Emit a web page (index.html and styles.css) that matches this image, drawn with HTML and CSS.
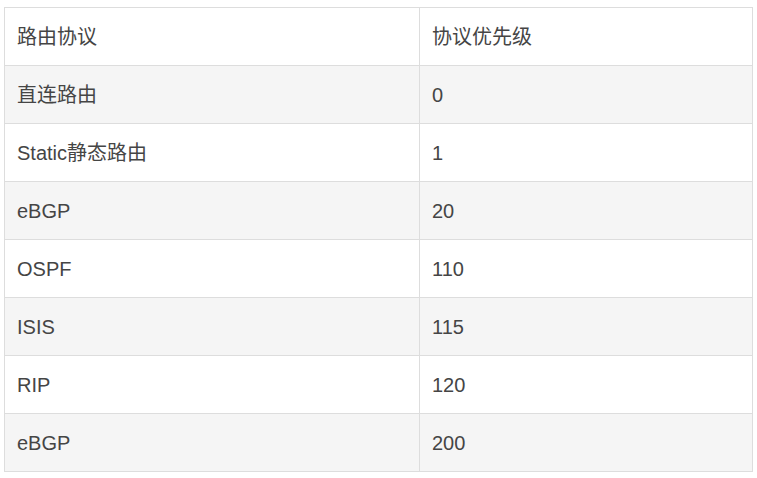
FILE: index.html
```html
<!DOCTYPE html>
<html lang="zh-CN">
<head>
<meta charset="utf-8">
<title>路由协议优先级</title>
<link rel="stylesheet" href="styles.css">
</head>
<body>
<table class="prio-table">
  <colgroup>
    <col class="col-proto">
    <col class="col-prio">
  </colgroup>
  <tbody>
    <tr class="row-head"><td>路由协议</td><td>协议优先级</td></tr>
    <tr class="row-alt"><td>直连路由</td><td>0</td></tr>
    <tr><td>Static静态路由</td><td>1</td></tr>
    <tr class="row-alt"><td>eBGP</td><td>20</td></tr>
    <tr><td>OSPF</td><td>110</td></tr>
    <tr class="row-alt"><td>ISIS</td><td>115</td></tr>
    <tr><td>RIP</td><td>120</td></tr>
    <tr class="row-alt"><td>eBGP</td><td>200</td></tr>
  </tbody>
</table>
</body>
</html>
```
FILE: styles.css
```css
html, body {
  margin: 0;
  padding: 0;
  background: #ffffff;
}

body {
  padding: 7px 4px;
  font-family: "Liberation Sans", Arial, "Noto Sans CJK SC", sans-serif;
  color: #454545;
}

.prio-table {
  border-collapse: collapse;
  width: 749px;
  table-layout: fixed;
}

.col-proto {
  width: 415px;
}

.prio-table td {
  border: 1px solid #dddddd;
  height: 57px;
  padding: 0 12px;
  font-size: 20px;
  line-height: 24px;
  vertical-align: middle;
  box-sizing: border-box;
}

.prio-table tr {
  height: 58px;
}

.row-alt td {
  background: #f5f5f5;
}
```
